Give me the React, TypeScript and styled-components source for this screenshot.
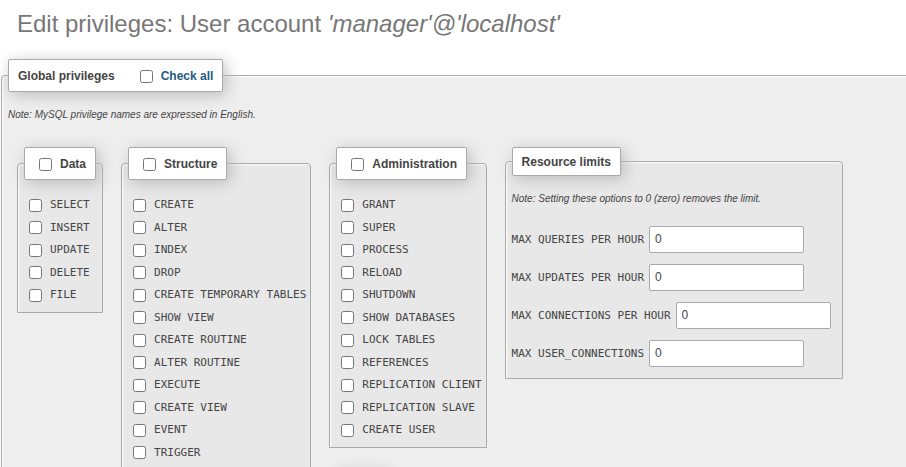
import React, { useState } from "react";
import styled, { createGlobalStyle, css } from "styled-components";

const GlobalStyle = createGlobalStyle`
  *, *::before, *::after { box-sizing: border-box; }
  html { overflow: hidden; }
  body {
    margin: 0;
    background: #fff;
    color: #444;
    font-family: "Liberation Sans", Arial, sans-serif;
    font-size: 12px;
  }
`;

const Page = styled.main`
  height: 100vh;
  overflow: hidden;
`;

const Title = styled.h2`
  margin: 0;
  padding: 8px 17px 19px;
  font-size: 24px;
  line-height: 32px;
  font-weight: normal;
  color: #777;
  white-space: nowrap;
`;

const panel = css`
  margin: 0;
  min-width: 0;
  border: 1px solid #aaa;
  border-radius: 4px 4px 0 0;
  box-shadow: 1px 1px 2px #fff inset;
`;

const GlobalPanel = styled.fieldset`
  ${panel}
  margin-left: 1px;
  margin-right: -8px;
  padding: 0 6px 40px;
  background: #eee;
`;

const Panel = styled.fieldset`
  ${panel}
  flex: none;
  padding: 0 6px 5px;
  background: #e8e8e8;
`;

const Legend = styled.legend<{ $compact?: boolean }>`
  padding: ${(p) => (p.$compact ? "5px 9px 3px" : "7px 9px 5px")};
  border: 1px solid #aaa;
  border-radius: 2px;
  background: #fff;
  box-shadow: 3px 3px 15px #bbb;
  color: #444;
  font-weight: bold;
  line-height: 19px;
`;

const LegendRow = styled.div`
  display: flex;
  gap: 20px;
`;

const CheckLabel = styled.label<{ $link?: boolean }>`
  display: flex;
  align-items: center;
  color: ${(p) => (p.$link ? "#235a81" : "inherit")};
`;

const Checkbox = styled.input.attrs({ type: "checkbox" })`
  flex: none;
  width: 13px;
  height: 13px;
  margin: 0 8px 0 5px;
`;

const Note = styled.p`
  margin: 0;
  padding-top: 15px;
  font-size: 10px;
  line-height: 16px;
  font-style: italic;
`;

const Panels = styled.div`
  display: flex;
  align-items: flex-start;
  gap: 18px;
  margin: 24px 9px 0;
`;

const Column = styled.div`
  display: flex;
  flex-direction: column;
  flex: none;
  gap: 22px;
`;

const PrivilegeList = styled.ul`
  list-style: none;
  margin: 0 -2px 0 0;
  padding: 14px 0 0;
  font-size: 15px;
  line-height: 1.5em;
`;

const Code = styled.code`
  font-family: "DejaVu Sans Mono", monospace;
  font-size: 11px;
  white-space: nowrap;
`;

const ResourcePanel = styled(Panel)`
  width: 338px;
`;

const Limits = styled.div`
  display: grid;
  gap: 11px;
  padding: 19px 0 6px;
`;

const LimitRow = styled.div`
  display: flex;
  align-items: center;
  gap: 5px;
`;

const LimitLabel = styled.label`
  padding-bottom: 2px;
`;

const LimitInput = styled.input`
  width: 155px;
  height: 27px;
  padding: 0 5px 2px;
  border: 1px solid #aaa;
  border-radius: 2px;
  background: #fff;
  color: #444;
  font: 12px "Liberation Sans", Arial, sans-serif;
`;

const NextLegend = styled(Legend)`
  width: 50px;
  height: 34px;
`;

const groups = {
  Data: ["SELECT", "INSERT", "UPDATE", "DELETE", "FILE"],
  Structure: [
    "CREATE", "ALTER", "INDEX", "DROP", "CREATE TEMPORARY TABLES", "SHOW VIEW",
    "CREATE ROUTINE", "ALTER ROUTINE", "EXECUTE", "CREATE VIEW", "EVENT", "TRIGGER",
  ],
  Administration: [
    "GRANT", "SUPER", "PROCESS", "RELOAD", "SHUTDOWN", "SHOW DATABASES",
    "LOCK TABLES", "REFERENCES", "REPLICATION CLIENT", "REPLICATION SLAVE", "CREATE USER",
  ],
};

const allPrivileges = Object.values(groups).flat();

const limits = [
  "MAX QUERIES PER HOUR",
  "MAX UPDATES PER HOUR",
  "MAX CONNECTIONS PER HOUR",
  "MAX USER_CONNECTIONS",
];

export default function App() {
  const [granted, setGranted] = useState<string[]>([]);

  const setAll = (names: string[], on: boolean) =>
    setGranted((current) => {
      const rest = current.filter((name) => !names.includes(name));
      return on ? [...rest, ...names] : rest;
    });

  const hasAll = (names: string[]) => names.every((name) => granted.includes(name));

  const group = (title: keyof typeof groups) => (
    <Panel>
      <Legend>
        <CheckLabel>
          <Checkbox
            checked={hasAll(groups[title])}
            onChange={(e) => setAll(groups[title], e.target.checked)}
          />
          {title}
        </CheckLabel>
      </Legend>
      <PrivilegeList>
        {groups[title].map((name) => (
          <li key={name}>
            <CheckLabel>
              <Checkbox
                checked={granted.includes(name)}
                onChange={(e) => setAll([name], e.target.checked)}
              />
              <Code>{name}</Code>
            </CheckLabel>
          </li>
        ))}
      </PrivilegeList>
    </Panel>
  );

  return (
    <Page>
      <GlobalStyle />
      <Title>
        Edit privileges: User account <em>'manager'@'localhost'</em>
      </Title>
      <GlobalPanel>
        <Legend>
          <LegendRow>
            <span>Global privileges</span>
            <CheckLabel $link>
              <Checkbox
                checked={hasAll(allPrivileges)}
                onChange={(e) => setAll(allPrivileges, e.target.checked)}
              />
              Check all
            </CheckLabel>
          </LegendRow>
        </Legend>
        <Note>Note: MySQL privilege names are expressed in English.</Note>
        <Panels>
          {group("Data")}
          {group("Structure")}
          <Column>
            {group("Administration")}
            <Panel>
              <NextLegend />
            </Panel>
          </Column>
          <ResourcePanel>
            <Legend $compact>Resource limits</Legend>
            <Note>Note: Setting these options to 0 (zero) removes the limit.</Note>
            <Limits>
              {limits.map((name) => (
                <LimitRow key={name}>
                  <LimitLabel htmlFor={name.replace(/ /g, "_")}>
                    <Code>{name}</Code>
                  </LimitLabel>
                  <LimitInput id={name.replace(/ /g, "_")} type="text" defaultValue="0" />
                </LimitRow>
              ))}
            </Limits>
          </ResourcePanel>
        </Panels>
      </GlobalPanel>
    </Page>
  );
}
